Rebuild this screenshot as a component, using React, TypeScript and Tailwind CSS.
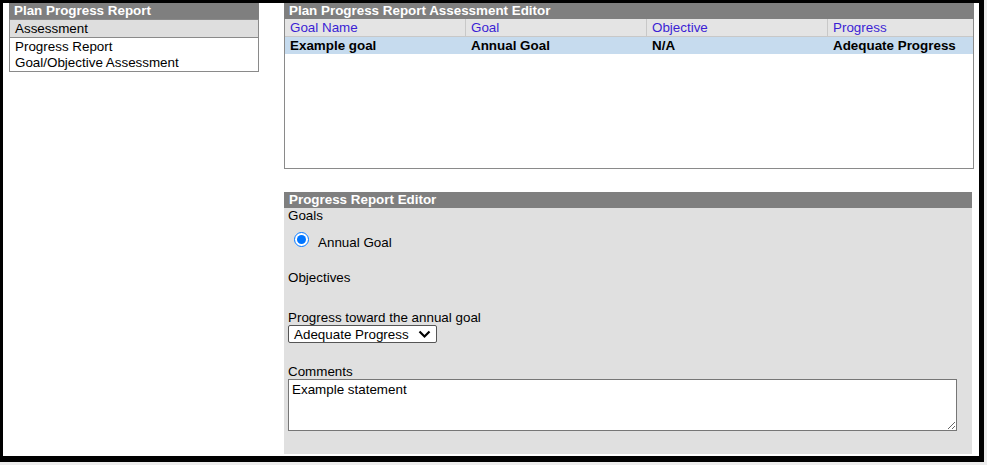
import type { ReactNode } from "react";

const font = { fontFamily: '"Liberation Sans", Arial, sans-serif' };

function Header({ children }: { children: ReactNode }) {
  return (
    <div className="h-[16px] bg-[#7f7f7f] px-[5px] text-[13.4px] font-bold leading-[16px] text-white">
      {children}
    </div>
  );
}

const columns = ["Goal Name", "Goal", "Objective", "Progress"];
const rows = [["Example goal", "Annual Goal", "N/A", "Adequate Progress"]];

export default function App() {
  return (
    <div className="h-[465px] w-[987px] bg-[#ececec]" style={font}>
      <div className="flex h-[462px] w-[984px] border-b-[6px] border-l-[3px] border-r-[5px] border-t-[3px] border-black bg-white text-[13.4px] text-black">
        {/* left nav */}
        <div className="ml-[6px] w-[250px]">
          <Header>Plan Progress Report</Header>
          <div className="border border-[#8a8a8a] leading-[16px]">
            <div className="border-b border-[#8a8a8a] bg-[#dedede] px-[5px] pt-[1px]">Assessment</div>
            <div className="px-[5px] pt-[1px]">Progress Report</div>
            <div className="px-[5px]">Goal/Objective Assessment</div>
          </div>
        </div>

        {/* right side */}
        <div className="ml-[25px] w-[690px]">
          <Header>Plan Progress Report Assessment Editor</Header>
          <div className="h-[150px] border border-t-0 border-[#8a8a8a]">
            <div className="grid grid-cols-[181px_181px_181px_1fr] border-b border-[#c8c8c8] bg-[#e4e4e4] leading-[17px] text-[#3b1fd4]">
              {columns.map((c, i) => (
                <div key={c} className={`px-[5px] ${i < 3 ? "border-r border-[#c8c8c8]" : ""}`}>
                  {c}
                </div>
              ))}
            </div>
            {rows.map((r) => (
              <div key={r[0]} className="grid grid-cols-[181px_181px_181px_1fr] bg-[#c6dbee] font-bold leading-[17px]">
                {r.map((v, i) => (
                  <div key={i} className="px-[5px]">
                    {v}
                  </div>
                ))}
              </div>
            ))}
          </div>

          <div className="mt-[23px] w-[688px]">
            <Header>Progress Report Editor</Header>
            <div className="h-[246px] bg-[#e0e0e0] px-[4px] leading-[15px]">
              <div>Goals</div>
              <label className="mt-[9px] flex items-start">
                <input type="radio" checked readOnly className="ml-[6px] mr-[9px] mt-0 h-[15px] w-[15px] accent-[#0075ff]" />
                <span className="mt-[3px]">Annual Goal</span>
              </label>
              <div className="mt-[20px]">Objectives</div>
              <div className="mt-[25px]">Progress toward the annual goal</div>
              <div className="flex h-[18px] w-[149px] items-center justify-between rounded-[2px] border border-[#555] bg-white pl-[5px] pr-[5px]">
                <span>Adequate Progress</span>
                <svg width="13" height="9" viewBox="0 0 13 9">
                  <path d="M1.5 1.5 L6.5 6.5 L11.5 1.5" fill="none" stroke="#000" strokeWidth="2.2" />
                </svg>
              </div>
              <div className="mt-[21px]">Comments</div>
              <textarea
                readOnly
                defaultValue="Example statement"
                className="block h-[52px] w-[669px] resize border border-[#767676] bg-white px-[3px] py-[2px] text-[13.4px] leading-[15px] outline-none"
                style={font}
              />
            </div>
          </div>
        </div>
      </div>
    </div>
  );
}
